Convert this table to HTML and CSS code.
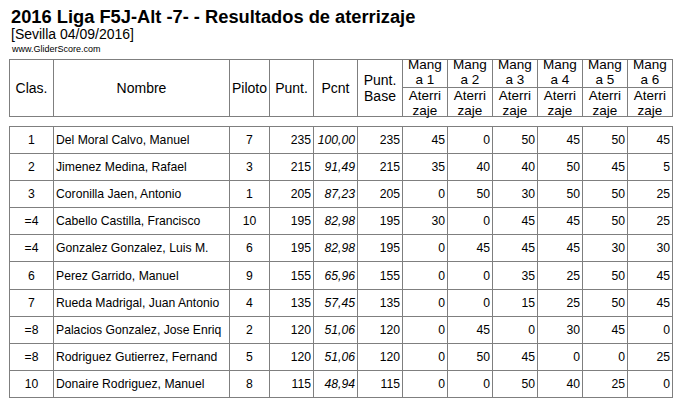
FILE: index.html
```html
<!DOCTYPE html>
<html lang="es">
<head>
<meta charset="utf-8">
<title>2016 Liga F5J-Alt -7- - Resultados de aterrizaje</title>
<link rel="stylesheet" href="styles.css">
</head>
<body>
<div class="page">
  <h1 class="title">2016 Liga F5J-Alt -7- - Resultados de aterrizaje</h1>
  <p class="subtitle">[Sevilla 04/09/2016]</p>
  <p class="site">www.GliderScore.com</p>

  <table class="grid head">
    <colgroup>
      <col class="c-clas"><col class="c-name"><col class="c-pil"><col class="c-pts"><col class="c-pct"><col class="c-base">
      <col class="c-r"><col class="c-r"><col class="c-r"><col class="c-r"><col class="c-r"><col class="c-r">
    </colgroup>
    <tr class="h1">
      <th rowspan="2">Clas.</th>
      <th rowspan="2">Nombre</th>
      <th rowspan="2">Piloto</th>
      <th rowspan="2">Punt.</th>
      <th rowspan="2">Pcnt</th>
      <th rowspan="2" class="two">Punt.<br>Base</th>
      <th><div class="tight">Mang<br>a 1</div></th>
      <th><div class="tight">Mang<br>a 2</div></th>
      <th><div class="tight">Mang<br>a 3</div></th>
      <th><div class="tight">Mang<br>a 4</div></th>
      <th><div class="tight">Mang<br>a 5</div></th>
      <th><div class="tight">Mang<br>a 6</div></th>
    </tr>
    <tr class="h2">
      <th><div class="tight">Aterri<br>zaje</div></th>
      <th><div class="tight">Aterri<br>zaje</div></th>
      <th><div class="tight">Aterri<br>zaje</div></th>
      <th><div class="tight">Aterri<br>zaje</div></th>
      <th><div class="tight">Aterri<br>zaje</div></th>
      <th><div class="tight">Aterri<br>zaje</div></th>
    </tr>
  </table>

  <table class="grid body">
    <colgroup>
      <col class="c-clas"><col class="c-name"><col class="c-pil"><col class="c-pts"><col class="c-pct"><col class="c-base">
      <col class="c-r"><col class="c-r"><col class="c-r"><col class="c-r"><col class="c-r"><col class="c-r">
    </colgroup>
    <tr><td class="ctr">1</td><td class="name">Del Moral Calvo, Manuel</td><td class="ctr">7</td><td class="num">235</td><td class="num pct">100,00</td><td class="num">235</td><td class="num">45</td><td class="num">0</td><td class="num">50</td><td class="num">45</td><td class="num">50</td><td class="num">45</td></tr>
    <tr><td class="ctr">2</td><td class="name">Jimenez Medina, Rafael</td><td class="ctr">3</td><td class="num">215</td><td class="num pct">91,49</td><td class="num">215</td><td class="num">35</td><td class="num">40</td><td class="num">40</td><td class="num">50</td><td class="num">45</td><td class="num">5</td></tr>
    <tr><td class="ctr">3</td><td class="name">Coronilla Jaen, Antonio</td><td class="ctr">1</td><td class="num">205</td><td class="num pct">87,23</td><td class="num">205</td><td class="num">0</td><td class="num">50</td><td class="num">30</td><td class="num">50</td><td class="num">50</td><td class="num">25</td></tr>
    <tr><td class="ctr">=4</td><td class="name">Cabello Castilla, Francisco</td><td class="ctr">10</td><td class="num">195</td><td class="num pct">82,98</td><td class="num">195</td><td class="num">30</td><td class="num">0</td><td class="num">45</td><td class="num">45</td><td class="num">50</td><td class="num">25</td></tr>
    <tr><td class="ctr">=4</td><td class="name">Gonzalez Gonzalez, Luis M.</td><td class="ctr">6</td><td class="num">195</td><td class="num pct">82,98</td><td class="num">195</td><td class="num">0</td><td class="num">45</td><td class="num">45</td><td class="num">45</td><td class="num">30</td><td class="num">30</td></tr>
    <tr><td class="ctr">6</td><td class="name">Perez Garrido, Manuel</td><td class="ctr">9</td><td class="num">155</td><td class="num pct">65,96</td><td class="num">155</td><td class="num">0</td><td class="num">0</td><td class="num">35</td><td class="num">25</td><td class="num">50</td><td class="num">45</td></tr>
    <tr><td class="ctr">7</td><td class="name">Rueda Madrigal, Juan Antonio</td><td class="ctr">4</td><td class="num">135</td><td class="num pct">57,45</td><td class="num">135</td><td class="num">0</td><td class="num">0</td><td class="num">15</td><td class="num">25</td><td class="num">50</td><td class="num">45</td></tr>
    <tr><td class="ctr">=8</td><td class="name">Palacios Gonzalez, Jose Enriq</td><td class="ctr">2</td><td class="num">120</td><td class="num pct">51,06</td><td class="num">120</td><td class="num">0</td><td class="num">45</td><td class="num">0</td><td class="num">30</td><td class="num">45</td><td class="num">0</td></tr>
    <tr><td class="ctr">=8</td><td class="name">Rodriguez Gutierrez, Fernand</td><td class="ctr">5</td><td class="num">120</td><td class="num pct">51,06</td><td class="num">120</td><td class="num">0</td><td class="num">50</td><td class="num">45</td><td class="num">0</td><td class="num">0</td><td class="num">25</td></tr>
    <tr><td class="ctr">10</td><td class="name">Donaire Rodriguez, Manuel</td><td class="ctr">8</td><td class="num">115</td><td class="num pct">48,94</td><td class="num">115</td><td class="num">0</td><td class="num">0</td><td class="num">50</td><td class="num">40</td><td class="num">25</td><td class="num">0</td></tr>
  </table>
</div>
</body>
</html>
```
FILE: styles.css
```css
html, body {
  margin: 0;
  padding: 0;
  background: #ffffff;
  color: #000000;
  font-family: "Liberation Sans", Arial, sans-serif;
}

.page {
  padding: 6px 8px 0 9px;
}

.title {
  margin: 0 0 0 2px;
  font-size: 18.3px;
  font-weight: bold;
  line-height: 21px;
}

.subtitle {
  margin: -1px 0 0 2px;
  font-size: 14px;
  line-height: 16px;
}

.site {
  margin: 2px 0 0 3px;
  font-size: 9px;
  line-height: 10px;
}

.grid {
  border-collapse: collapse;
  table-layout: fixed;
  width: 664px;
}

.grid th,
.grid td {
  border: 1px solid #7f7f7f;
  padding: 0;
  overflow: visible;
}

.c-clas { width: 44px; }
.c-name { width: 176px; }
.c-pil { width: 40px; }
.c-pts { width: 44px; }
.c-pct { width: 44px; }
.c-base { width: 45px; }
.c-r { width: 45px; }

.head {
  margin-top: 5px;
}

.head th {
  font-weight: normal;
  font-size: 14px;
  line-height: 16px;
  text-align: center;
  vertical-align: middle;
}

.head .h1 th { height: 27px; }
.head .h2 th { height: 26px; }

.head .tight {
  display: flex;
  flex-direction: column;
  justify-content: center;
  font-size: 13.5px;
  line-height: 15px;
  overflow: visible;
}

.head .h1 .tight { height: 27px; margin-top: -2.5px; }
.head .h2 .tight { height: 26px; margin-top: 1.5px; }

.body {
  margin-top: 9px;
}

.body td {
  height: 26.2px;
  font-size: 12.2px;
  line-height: 14px;
  vertical-align: middle;
}

.body .ctr { text-align: center; }
.body .name { text-align: left; padding-left: 2px; white-space: nowrap; }
.body .num { text-align: right; padding-right: 2px; }
.body .pct { font-style: italic; }
```
